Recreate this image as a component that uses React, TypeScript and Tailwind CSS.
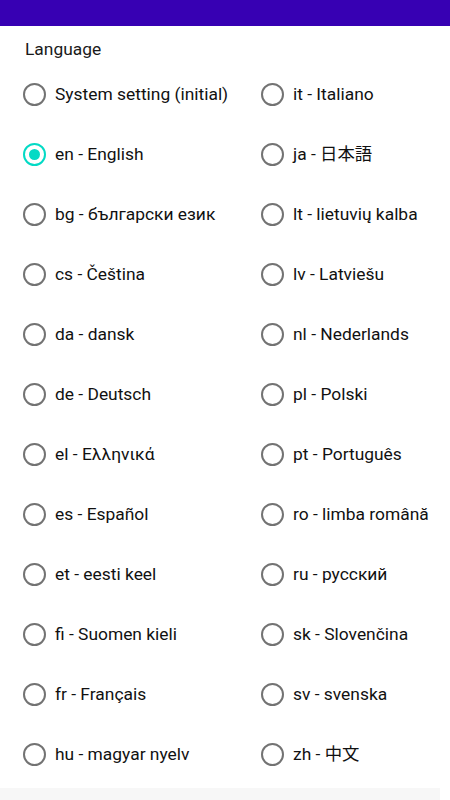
const left = [
  "System setting (initial)",
  "en - English",
  "bg - български език",
  "cs - Čeština",
  "da - dansk",
  "de - Deutsch",
  "el - Ελληνικά",
  "es - Español",
  "et - eesti keel",
  "fi - Suomen kieli",
  "fr - Français",
  "hu - magyar nyelv",
];

const right = [
  "it - Italiano",
  "ja - 日本語",
  "lt - lietuvių kalba",
  "lv - Latviešu",
  "nl - Nederlands",
  "pl - Polski",
  "pt - Português",
  "ro - limba română",
  "ru - русский",
  "sk - Slovenčina",
  "sv - svenska",
  "zh - 中文",
];

function Radio({ label, checked }: { label: string; checked?: boolean }) {
  return (
    <div className="flex h-[60px] items-center">
      {checked ? (
        <span className="flex h-[23px] w-[23px] items-center justify-center rounded-full border-[2.5px] border-[#03dac5]">
          <span className="h-[11px] w-[11px] rounded-full bg-[#03dac5]" />
        </span>
      ) : (
        <span className="h-[23px] w-[23px] rounded-full border-[2.5px] border-[#737373]" />
      )}
      <span className="ml-[9px] text-[17.4px] text-[#111]">{label}</span>
    </div>
  );
}

export default function App() {
  return (
    <div
      className="flex h-[800px] w-[450px] flex-col bg-white"
      style={{ fontFamily: 'Roboto, "Noto Sans CJK JP", sans-serif' }}
    >
      <div className="h-[26px] bg-[#3700b3]" />
      <div className="flex-1">
        <p className="pl-[25px] pt-[11px] text-[17.4px] leading-[24px] text-[#1a1a1a]">Language</p>
        <div className="grid grid-cols-[238px_1fr] pl-[23px] pt-[3px]">
          <div className="flex flex-col">
            {left.map((l) => (
              <Radio key={l} label={l} checked={l.startsWith("en")} />
            ))}
          </div>
          <div className="flex flex-col">
            {right.map((l) => (
              <Radio key={l} label={l} />
            ))}
          </div>
        </div>
      </div>
      <div className="h-[12px] w-[440px] bg-[#f7f7f7]" />
    </div>
  );
}
